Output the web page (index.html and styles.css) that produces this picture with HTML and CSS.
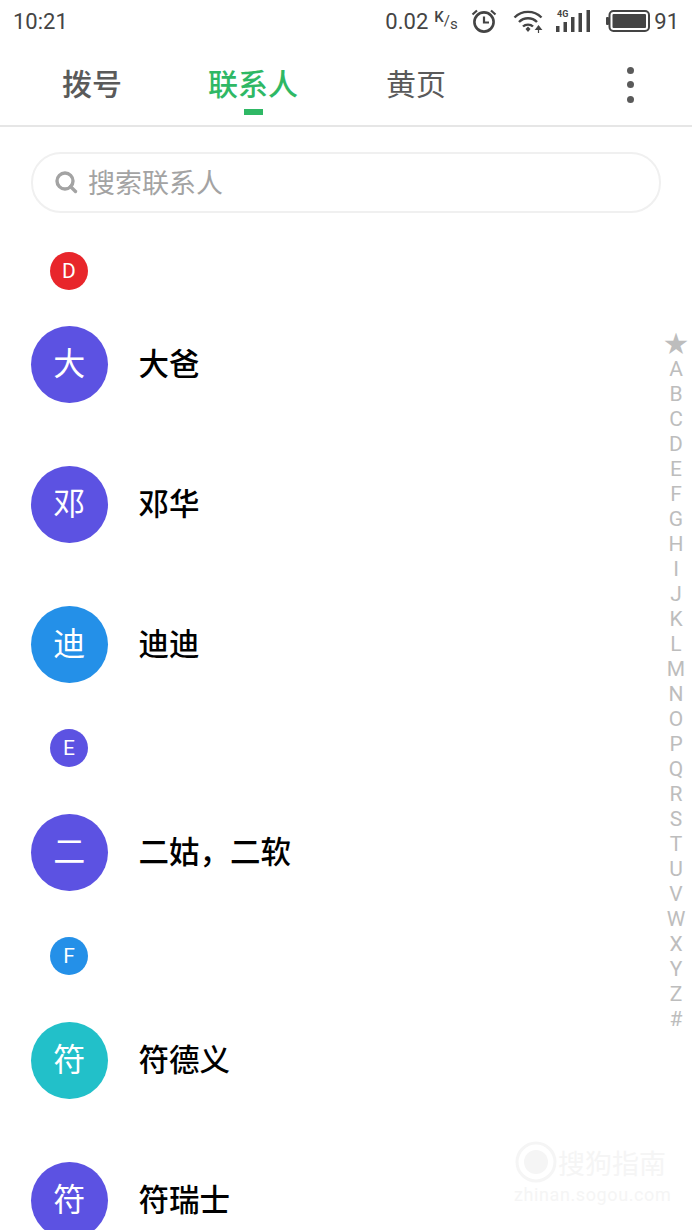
FILE: index.html
```html
<!DOCTYPE html>
<html lang="zh-CN">
<head>
    <meta charset="UTF-8">
    <meta name="viewport" content="width=device-width, initial-scale=1.0">
    <title>联系人</title>
    <link rel="stylesheet" href="styles.css">
</head>
<body>
    <div class="phone">
        <div class="status-bar">
            <span class="time">10:21</span>
            <div class="status-right">
                <span class="speed">0.02</span>
                <span class="speed-unit"><b>K</b>/<i>s</i></span>
                <svg class="ic-alarm" width="28" height="26" viewBox="0 0 28 26">
                    <circle cx="14" cy="14" r="9.6" fill="none" stroke="#444" stroke-width="2.6"/>
                    <path d="M14 8.5V14.5H19" fill="none" stroke="#444" stroke-width="2.2"/>
                    <path d="M2.5 6.5L7 2.5M25.5 6.5L21 2.5" stroke="#444" stroke-width="2.2"/>
                </svg>
                <svg class="ic-wifi" width="32" height="26" viewBox="0 0 32 26">
                    <path d="M1.5 9.5C9 2 21 2 28.500 9.500M6 14C11 9 19 9 24 14M10 18.500C12.500 16 17.500 16 20 18.500" fill="none" stroke="#444" stroke-width="2.400"/>
                    <path d="M12.500 21L15 18.500L17.500 21L15 24Z" fill="#444"/>
                    <path d="M25.500 25V20M22.800 21.500L25.500 18L28.200 21.500Z" fill="#444" stroke="#444" stroke-width="1.200"/>
                </svg>
                <svg class="ic-signal" width="34" height="26" viewBox="0 0 34 26">
                    <text x="1" y="9" class="net-label">4G</text>
                    <rect x="0" y="18" width="3.500" height="6" fill="#444"/>
                    <rect x="7.500" y="14" width="3.500" height="10" fill="#444"/>
                    <rect x="15" y="9" width="3.500" height="15" fill="#444"/>
                    <rect x="22.500" y="5" width="3.500" height="19" fill="#444"/>
                    <rect x="30.500" y="2" width="3.500" height="22" fill="#444"/>
                </svg>
                <svg class="ic-battery" width="44" height="24" viewBox="0 0 44 24">
                    <rect x="0" y="8" width="3" height="8" rx="1" fill="#444"/>
                    <rect x="3.500" y="2" width="39.500" height="20" rx="4" fill="none" stroke="#444" stroke-width="2"/>
                    <rect x="6.500" y="5" width="33.500" height="14" rx="1" fill="#444"/>
                </svg>
                <span class="battery-num">91</span>
            </div>
        </div>

        <div class="tabs">
            <span class="tab tab-dial">拨号</span>
            <span class="tab tab-contacts">联系人</span>
            <span class="tab tab-pages">黄页</span>
            <div class="more"><i></i><i></i><i></i></div>
        </div>

        <div class="search-wrap">
            <div class="search">
                <svg width="26" height="26" viewBox="0 0 26 26">
                    <circle cx="12" cy="12" r="8" fill="none" stroke="#a3a3a3" stroke-width="3.400"/>
                    <path d="M17.500 17.500L22.500 22.500" stroke="#a3a3a3" stroke-width="3.400" stroke-linecap="round"/>
                </svg>
                <span>搜索联系人</span>
            </div>
        </div>

        <div class="list">
            <div class="letter red first">D</div>
            <div class="row"><div class="avatar violet">大</div><div class="name">大爸</div></div>
            <div class="row"><div class="avatar violet">邓</div><div class="name">邓华</div></div>
            <div class="row"><div class="avatar blue">迪</div><div class="name">迪迪</div></div>
            <div class="letter violet">E</div>
            <div class="row"><div class="avatar violet">二</div><div class="name">二姑，二软</div></div>
            <div class="letter blue">F</div>
            <div class="row"><div class="avatar teal">符</div><div class="name">符德义</div></div>
            <div class="row"><div class="avatar violet">符</div><div class="name">符瑞士</div></div>
        </div>

        <div class="index">
            <span class="star">★</span>
            <span>A</span><span>B</span><span>C</span><span>D</span><span>E</span><span>F</span><span>G</span>
            <span>H</span><span>I</span><span>J</span><span>K</span><span>L</span><span>M</span><span>N</span>
            <span>O</span><span>P</span><span>Q</span><span>R</span><span>S</span><span>T</span><span>U</span>
            <span>V</span><span>W</span><span>X</span><span>Y</span><span>Z</span><span>#</span>
        </div>

        <div class="watermark">
            <div class="wm-top">
                <svg width="44" height="44" viewBox="0 0 44 44">
                    <circle cx="22" cy="22" r="19" fill="none" stroke="#f5f5f5" stroke-width="3"/>
                    <circle cx="22" cy="22" r="12" fill="#f5f5f5"/>
                </svg>
                <span>搜狗指南</span>
            </div>
            <div class="wm-url">zhinan.sogou.com</div>
        </div>
    </div>
</body>
</html>
```

FILE: styles.css
```css
* { box-sizing: border-box; }
html, body { margin: 0; padding: 0; }
body {
    background: #fff;
    font-family: "Roboto", "Noto Sans CJK SC", sans-serif;
}
.phone {
    position: relative;
    width: 692px;
    height: 1230px;
    overflow: hidden;
    background: #fff;
}

/* status bar */
.status-bar {
    display: flex;
    justify-content: space-between;
    align-items: center;
    height: 42px;
    padding: 0 13px 0 13px;
    color: #444;
}
.time { font-size: 22px; }
.status-right { display: flex; align-items: center; }
.speed { font-size: 22px; }
.speed-unit { width: 24px; margin-left: 6px; font-size: 15px; line-height: 1; }
.speed-unit b { font-weight: 500; vertical-align: 4px; }
.speed-unit i { font-style: normal; vertical-align: -3px; }
.ic-alarm { margin-left: 12px; }
.ic-wifi { margin-left: 15px; }
.ic-signal { margin-left: 11px; }
.ic-battery { margin-left: 16px; }
.net-label { font-size: 9px; font-weight: 700; fill: #444; }
.battery-num { margin-left: 4px; font-size: 22px; }

/* tabs */
.tabs {
    position: relative;
    display: flex;
    align-items: center;
    height: 85px;
    padding-top: 2px;
    border-bottom: 2px solid #e6e6e6;
}
.tab { font-size: 30px; color: #5a5a5a; line-height: 40px; }
.tab-dial { margin-left: 62px; font-weight: 500; }
.tab-contacts { position: relative; margin-left: 86px; color: #2fb865; font-weight: 500; }
.tab-contacts::after {
    content: "";
    position: absolute;
    left: 36px;
    bottom: -10px;
    width: 19px;
    height: 6px;
    background: #2fb865;
}
.tab-pages { margin-left: 88px; }
.more {
    display: flex;
    flex-direction: column;
    gap: 7.500px;
    margin-left: auto;
    margin-right: 58px;
}
.more i { display: block; width: 7px; height: 7px; border-radius: 50%; background: #5a5a5a; }

/* search */
.search-wrap { padding: 25px 31px 0; }
.search {
    display: flex;
    align-items: center;
    height: 61px;
    padding: 0 0 2px 20px;
    border: 2px solid #f0f0f0;
    border-radius: 30px;
    color: #a3a3a3;
    font-size: 27px;
}
.search span { margin-left: 9px; }

/* list */
.list { padding-left: 31px; }
.letter {
    width: 38px;
    height: 38px;
    margin: 0 0 46px 19px;
    border-radius: 50%;
    color: #fff;
    font-size: 21px;
    line-height: 38px;
    text-align: center;
}
.first { margin-top: 39px; margin-bottom: 35px; }
.row {
    display: flex;
    align-items: center;
    height: 78px;
    margin-bottom: 62px;
}
.row:has(+ .letter) { margin-bottom: 46px; }
.avatar {
    width: 76.500px;
    height: 77px;
    border-radius: 50%;
    color: #fff;
    font-size: 32px;
    line-height: 77px;
    text-align: center;
}
.name { margin-left: 31px; padding-bottom: 4px; font-size: 30.500px; color: #000; font-weight: 500; }
.red { background: #e8262b; }
.violet { background: #5c52e2; }
.blue { background: #2490e8; }
.teal { background: #22c0c9; }

/* alphabet index */
.index {
    position: absolute;
    top: 331px;
    right: 0;
    display: flex;
    flex-direction: column;
    width: 32px;
    color: #bdbdbd;
    font-size: 21px;
    line-height: 25px;
    text-align: center;
}
.star { font-size: 24px; line-height: 26px; }

/* watermark */
.watermark {
    position: absolute;
    top: 1140px;
    left: 514px;
    color: #f5f5f5;
}
.wm-top { display: flex; align-items: center; font-size: 27px; }
.wm-url { font-size: 18px; letter-spacing: 0.600px; }
```
